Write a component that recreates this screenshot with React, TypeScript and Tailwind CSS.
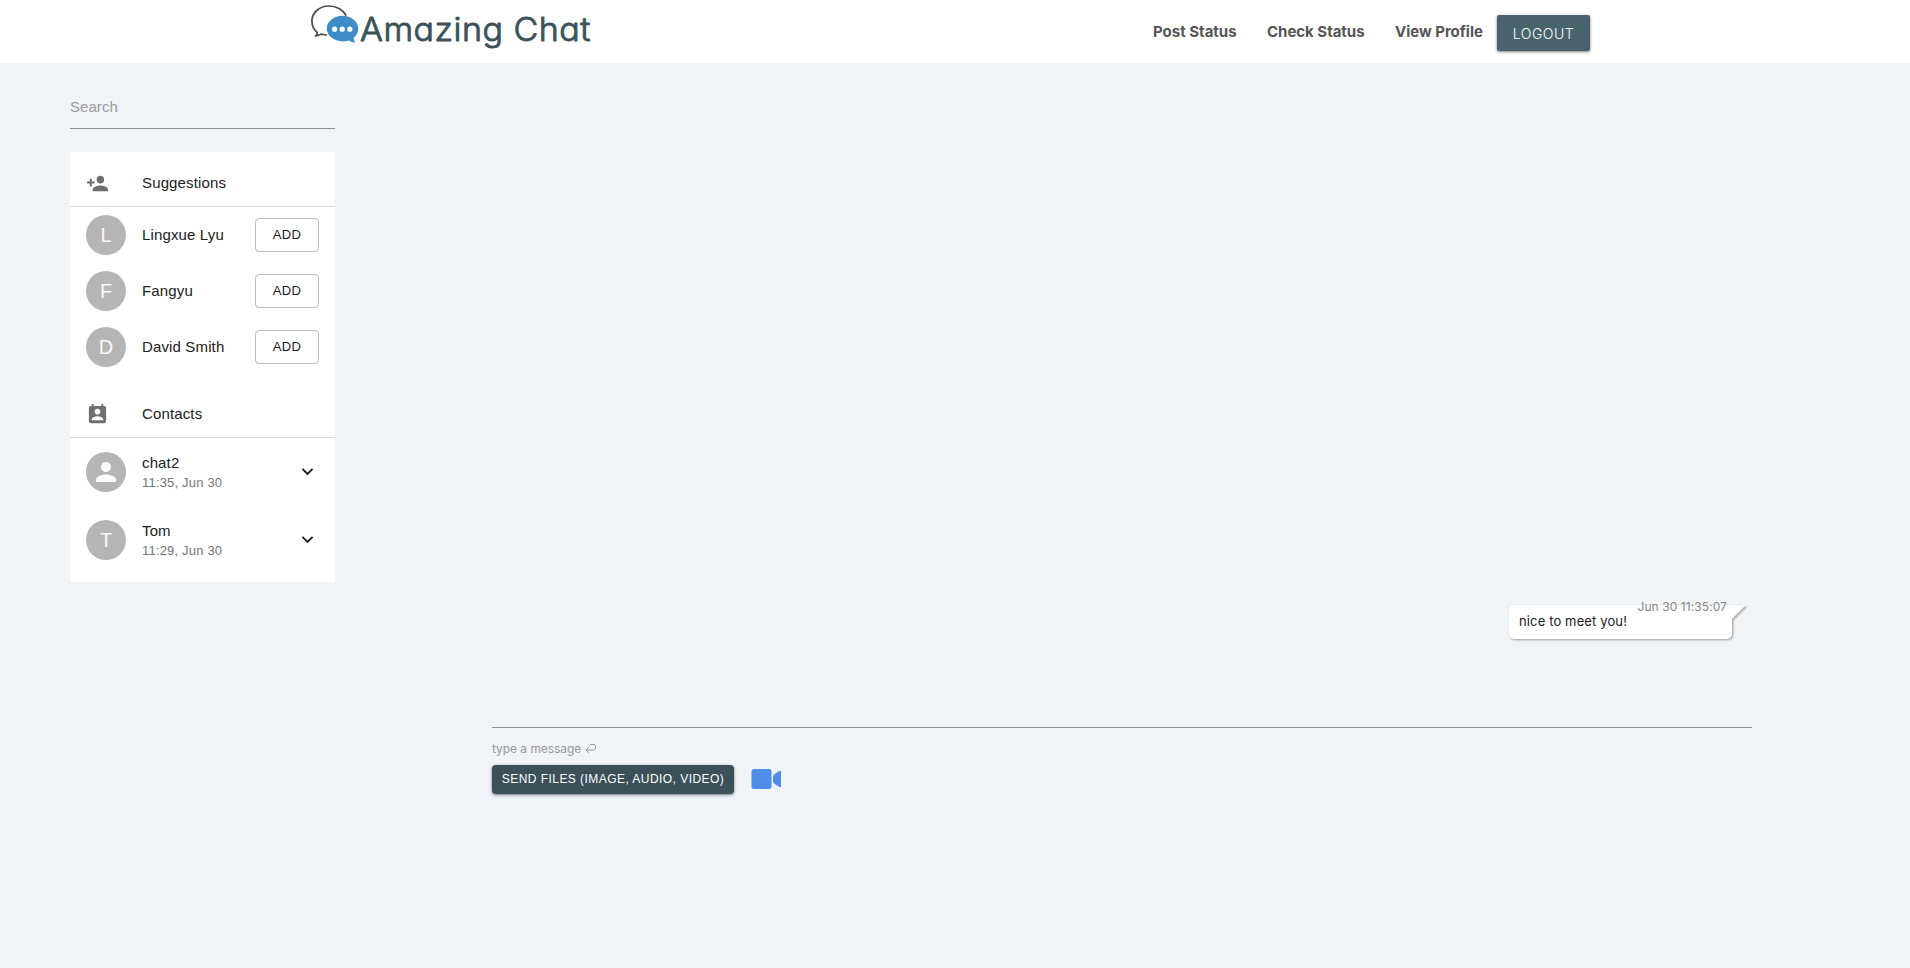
import React from "react";

const people = ["Lingxue Lyu", "Fangyu", "David Smith"];
const contacts = [
  { name: "chat2", time: "11:35, Jun 30", letter: "" },
  { name: "Tom", time: "11:29, Jun 30", letter: "T" },
];

function Icon({ d, className }: { d: string; className: string }) {
  return (
    <svg viewBox="0 0 24 24" className={className} fill="currentColor" aria-hidden="true">
      <path d={d} />
    </svg>
  );
}

const ADD_PERSON =
  "M15 12c2.21 0 4-1.79 4-4s-1.79-4-4-4-4 1.79-4 4 1.79 4 4 4zm-9-2V7H4v3H1v2h3v3h2v-3h3v-2H6zm9 4c-2.67 0-8 1.34-8 4v2h16v-2c0-2.66-5.33-4-8-4z";
const CONTACT =
  "M19 3h-1V1h-2v2H8V1H6v2H5c-1.11 0-2 .9-2 2v14c0 1.1.89 2 2 2h14c1.1 0 2-.9 2-2V5c0-1.1-.9-2-2-2zm-7 3c1.66 0 3 1.34 3 3s-1.34 3-3 3-3-1.34-3-3 1.34-3 3-3zm6 12H6v-1c0-2 4-3.1 6-3.1s6 1.1 6 3.1v1z";
const PERSON =
  "M12 12c2.21 0 4-1.79 4-4s-1.79-4-4-4-4 1.79-4 4 1.79 4 4 4zm0 2c-2.67 0-8 1.34-8 4v2h16v-2c0-2.66-5.33-4-8-4z";
const CHEVRON = "M7.41 8.59 12 13.17l4.59-4.58L18 10l-6 6-6-6 1.41-1.41z";

function Logo() {
  return (
    <div className="flex h-full items-start">
      <svg viewBox="0 0 50 44" className="mt-[5px] h-[44px] w-[50px]" aria-hidden="true">
        <path
          d="M35.800 10C33 4.500 26 1 19 1C9 1 1.900 8 1.900 16C1.900 21 4.200 25 7.300 27.500C7.500 29 6.600 30.200 5.600 30.900C7.800 30.900 9.300 30 10.800 29.200L16.500 30"
          fill="none"
          stroke="#4a4a4a"
          strokeWidth="1.700"
          strokeLinecap="round"
          strokeLinejoin="round"
        />
        <path
          d="M32.500 10.800C41 10.800 48.300 16.500 48.300 23.600C48.300 27.500 46.400 30.700 43.600 33C43.600 34.800 44.300 36.400 45.500 37.400C42.700 37.400 40.600 36.400 38.800 35.400C36.800 36.100 34.700 36.400 32.500 36.400C24 36.400 16.800 30.700 16.800 23.600C16.800 16.500 24 10.800 32.500 10.800Z"
          fill="#3d8cc7"
        />
        <circle cx="24.600" cy="24.200" r="2.600" fill="white" />
        <circle cx="32.200" cy="24.200" r="2.600" fill="white" />
        <circle cx="39.800" cy="24.200" r="2.600" fill="white" />
      </svg>
      <svg viewBox="0 0 235 56" className="h-[56px] w-[235px]" aria-label="Amazing Chat">
        <text
          x="0"
          y="40.800"
          textLength="231"
          lengthAdjust="spacingAndGlyphs"
          className="fill-[#3b525b] stroke-[#3b525b] font-['Inter',sans-serif] text-[33px] font-light tracking-[0.500px] [font-feature-settings:'cv11','ss03']"
          strokeWidth="0.900"
          strokeLinejoin="round"
        >
          Amazing Chat
        </text>
      </svg>
    </div>
  );
}

function Avatar({ children }: { children: React.ReactNode }) {
  return (
    <div className="flex size-10 shrink-0 items-center justify-center rounded-full bg-[#b5b5b5] text-[20px] leading-none text-[#fafafa]">
      {children}
    </div>
  );
}

function SectionTitle({ icon, title }: { icon: string; title: string }) {
  return (
    <div className="flex h-[47px] items-center border-b border-[#dcdcdc] pl-4">
      <Icon d={icon} className="size-[23px] text-[#6e6e6e]" />
      <span className="ml-[33px] text-[15px] tracking-[0.140px]">{title}</span>
    </div>
  );
}

export default function App() {
  return (
    <div className="h-[968px] w-[1910px] overflow-hidden bg-[#f0f4f7] font-['Liberation_Sans',sans-serif] text-[#212121]">
      <header className="flex h-[63px] justify-between bg-white pl-[310px] pr-[320px]">
        <Logo />
        <nav className="flex items-start font-['Inter',sans-serif] text-[15px] font-bold text-[#555]">
          <a className="mt-[21px] mr-[30px] w-[84px] whitespace-nowrap leading-[22px]">Post Status</a>
          <a className="mt-[21px] mr-[30px] w-[98px] whitespace-nowrap leading-[22px] tracking-[-0.020px]">Check Status</a>
          <a className="mt-[21px] mr-[15px] w-[87px] whitespace-nowrap leading-[22px] tracking-[-0.020px]">View Profile</a>
          <button className="mt-[15px] h-9 w-[93px] rounded-[2px] bg-[#48636d] text-[14px] font-light tracking-[0.550px] text-white shadow-[0_1px_3px_rgba(0,0,0,0.5)]">
            LOGOUT
          </button>
        </nav>
      </header>

      <div className="flex">
        <aside className="ml-[70px] w-[265px]">
          <div className="flex h-[66px] items-end border-b border-[#8d9093] pb-[11px]">
            <span className="text-[15px] leading-[20px] tracking-[0.050px] text-[#9a9c9e]">Search</span>
          </div>
          <section className="mt-[23px] h-[430px] bg-white pt-[8px]">
            <SectionTitle icon={ADD_PERSON} title="Suggestions" />
            <ul>
              {people.map((name) => (
                <li key={name} className="flex h-14 items-center px-4">
                  <Avatar>{name[0]}</Avatar>
                  <span className="ml-4 flex-1 whitespace-nowrap text-[15px] tracking-[0.140px]">{name}</span>
                  <button className="h-[34px] w-16 rounded-[4px] border border-[#bcbcbc] text-[13px] tracking-[0.300px]">
                    ADD
                  </button>
                </li>
              ))}
            </ul>
            <div className="pt-4">
              <SectionTitle icon={CONTACT} title="Contacts" />
            </div>
            <ul>
              {contacts.map((c) => (
                <li key={c.name} className="flex h-[68px] items-center px-4">
                  <Avatar>{c.letter || <Icon d={PERSON} className="size-[30px]" />}</Avatar>
                  <div className="ml-4 flex-1">
                    <div className="text-[15px] leading-[20px] tracking-[0.140px]">{c.name}</div>
                    <div className="text-[13px] leading-[19px] tracking-[0.190px] text-[#757575]">{c.time}</div>
                  </div>
                  <Icon d={CHEVRON} className="mb-px size-[23px]" />
                </li>
              ))}
            </ul>
          </section>
        </aside>

        <main className="ml-[157px] w-[1260px] font-['Inter',sans-serif]">
          <div className="flex h-[665px] items-start justify-end border-b border-[#8d9093] pr-[5px] pt-[541px]">
            <div className="relative h-[36px] w-[238px]">
              <svg
                viewBox="0 0 238 36"
                className="absolute inset-0 h-[36px] w-[238px] overflow-visible [filter:drop-shadow(1px_1px_1px_rgba(0,0,0,0.38))]"
                aria-hidden="true"
              >
                <path d="M5 1H237L223 15V30a5 5 0 0 1-5 5H5a5 5 0 0 1-5-5V6a5 5 0 0 1 5-5Z" fill="white" />
              </svg>
              <span className="absolute right-[20px] top-[-5px] whitespace-nowrap text-[12px] leading-[16px] tracking-[0.080px] text-[#858585]">
                Jun 30 11:35:07
              </span>
              <p className="absolute left-[10px] top-[9px] whitespace-nowrap text-[13px] leading-[16px] tracking-[0.130px]">
                nice to meet you!
              </p>
            </div>
          </div>
          <div className="flex h-[37px] items-center pt-[4px] text-[12px] text-[#969899]">
            <span className="tracking-[-0.050px]">type a message</span>
            <svg viewBox="0 0 12 12" className="ml-1 size-3" fill="none" stroke="currentColor" aria-hidden="true">
              <path d="M5 1.500H8.500Q10.500 1.500 10.500 3.500V5Q10.500 7 8.500 7H1M4 4L1 7L4 10" />
            </svg>
          </div>
          <div className="flex items-start">
            <button className="h-[29px] w-[242px] whitespace-nowrap rounded-[4px] bg-[#3b5059] pb-px font-['Liberation_Sans',sans-serif] text-[12px] tracking-[0.450px] text-white shadow-[0_1px_3px_rgba(0,0,0,0.5)]">
              SEND FILES (IMAGE, AUDIO, VIDEO)
            </button>
            <svg viewBox="0 0 30 20" className="ml-[17px] mt-1 h-5 w-[30px]" fill="#4f8de8" aria-hidden="true">
              <rect x="0.500" width="20" height="20" rx="2.500" />
              <path d="M22 7.500Q22 6.500 23 5.600L27 2.800Q28 1.900 30 1.900V18.100Q28 18.100 27 17.200L23 14.400Q22 13.500 22 12.500Z" />
            </svg>
          </div>
        </main>
      </div>
    </div>
  );
}
